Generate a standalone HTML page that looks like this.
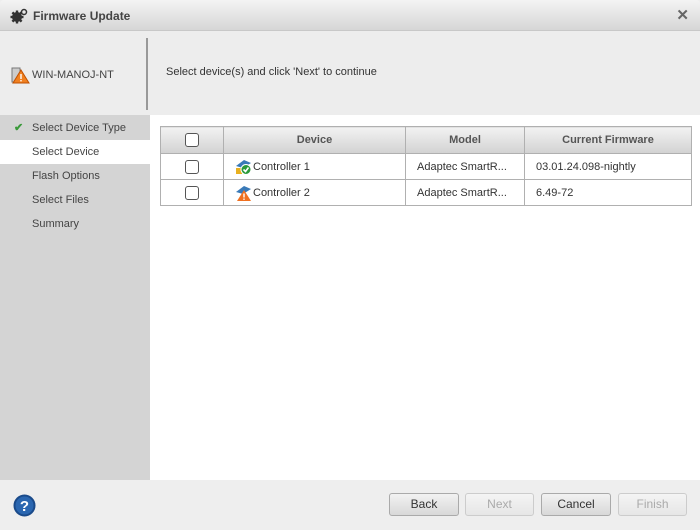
<!DOCTYPE html>
<html><head><meta charset="utf-8"><style>
*{margin:0;padding:0;box-sizing:border-box}
body{width:700px;height:530px;overflow:hidden;font-family:"Liberation Sans",Arial,sans-serif;font-size:11px;color:#333;background:#eee;position:relative}
.abs{position:absolute}
.title{left:0;top:0;width:700px;height:31px;background:linear-gradient(#f4f4f4,#d6d6d6);border-bottom:1px solid #c8c8c8;border-radius:4px 4px 0 0}
.title span{position:absolute;left:33px;top:9px;font-weight:bold;font-size:12px;color:#444}
.hdr{left:0;top:31px;width:700px;height:84px;background:#ededed}
.side{left:0;top:115px;width:150px;height:365px;background:#d4d4d4}
.item{position:absolute;left:0;width:150px;height:24px;line-height:25px;padding-left:32px;color:#444}
.main{left:150px;top:115px;width:550px;height:365px;background:#fff}
table{position:absolute;left:160px;top:126px;border-collapse:collapse;width:532px}
td,th{border:1px solid #b0b0b0;height:27px;padding:1px 0 0 11px;text-align:left;font-weight:normal;color:#333}
th{background:linear-gradient(#f2f2f2,#d2d2d2);font-weight:bold;color:#555;text-align:center;padding:0;font-size:11px}
tr.r td{height:26px}
.cb{display:inline-block;width:14px;height:14px;border:1px solid #555;border-radius:3px;background:#fff;vertical-align:middle}
.btn{position:absolute;top:493px;height:23px;border:1px solid #aaa;border-radius:3px;background:linear-gradient(#f2f2f2,#d8d8d8);text-align:center;line-height:21px;color:#333;font-size:12px}
.dis{color:#aaa;border-color:#ccc;background:linear-gradient(#f4f4f4,#e6e6e6)}
</style></head><body>
<div class="abs title">
<svg class="abs" style="left:10px;top:8px" width="18" height="16" viewBox="0 0 18 16"><circle cx="7" cy="9" r="5" fill="#333"/><circle cx="7" cy="9" r="2" fill="#ddd"/><g stroke="#333" stroke-width="2.4"><line x1="7" y1="2.5" x2="7" y2="15.5"/><line x1="0.5" y1="9" x2="13.5" y2="9"/><line x1="2.4" y1="4.4" x2="11.6" y2="13.6"/><line x1="11.6" y1="4.4" x2="2.4" y2="13.6"/></g><circle cx="14" cy="4" r="2.5" fill="none" stroke="#333" stroke-width="1.5"/></svg>
<span>Firmware Update</span>
<div class="abs" style="right:11px;top:6px;font-size:15px;color:#666;font-weight:bold">✕</div>
</div>
<div class="abs hdr">
<svg class="abs" style="left:10px;top:35px" width="20" height="18" viewBox="0 0 20 18"><rect x="2" y="2" width="8" height="14" fill="#ccc" stroke="#777"/><polygon points="11,4 19,17 3,17" fill="#f08020" stroke="#c05000"/><rect x="10.3" y="8" width="1.4" height="5" fill="#fff"/><rect x="10.3" y="14" width="1.4" height="1.4" fill="#fff"/></svg>
<div class="abs" style="left:32px;top:38px;color:#444">WIN-MANOJ-NT</div>
<div class="abs" style="left:146px;top:7px;width:2px;height:72px;background:#999"></div>
<div class="abs" style="left:166px;top:35px;color:#333">Select device(s) and click 'Next' to continue</div>
</div>
<div class="abs side">
<div class="item" style="top:1px"><span style="position:absolute;left:14px;color:#3a9a3a;font-weight:bold">✔</span>Select Device Type</div>
<div class="item" style="top:25px;background:#fff">Select Device</div>
<div class="item" style="top:49px">Flash Options</div>
<div class="item" style="top:73px">Select Files</div>
<div class="item" style="top:97px">Summary</div>
</div>
<div class="abs main"></div>
<table>
<tr><th style="width:63px"><span class="cb"></span></th><th style="width:182px">Device</th><th style="width:119px">Model</th><th>Current Firmware</th></tr>
<tr class="r"><td style="text-align:center;padding:0"><span class="cb"></span></td><td style="padding-left:11px"><svg width="18" height="16" viewBox="0 0 18 16" style="vertical-align:middle"><polygon points="1,7 9,1 16,4 8,9" fill="#3a7ab8"/><rect x="1" y="9" width="6" height="6" fill="#e8b020"/><circle cx="11" cy="10.5" r="5" fill="#2a9a3a" stroke="#fff"/><path d="M8.5 10.5l2 2 3-4" stroke="#fff" stroke-width="1.6" fill="none"/></svg>Controller 1</td><td>Adaptec SmartR...</td><td>03.01.24.098-nightly</td></tr>
<tr class="r"><td style="text-align:center;padding:0"><span class="cb"></span></td><td style="padding-left:11px"><svg width="18" height="16" viewBox="0 0 18 16" style="vertical-align:middle"><polygon points="1,7 9,1 16,4 8,9" fill="#3a7ab8"/><polygon points="9,5 16,16 2,16" fill="#f07020"/><rect x="8.3" y="8.5" width="1.4" height="4" fill="#fff"/><rect x="8.3" y="13.5" width="1.4" height="1.4" fill="#fff"/></svg>Controller 2</td><td>Adaptec SmartR...</td><td>6.49-72</td></tr>
</table>
<svg class="abs" style="left:13px;top:494px" width="23" height="23" viewBox="0 0 23 23"><circle cx="11.5" cy="11.5" r="11" fill="#1a4a8a"/><circle cx="11.5" cy="11.5" r="9" fill="#2a66b0"/><text x="11.5" y="17" text-anchor="middle" font-family="Liberation Sans" font-weight="bold" font-size="15" fill="#fff">?</text></svg>
<div class="btn" style="left:389px;width:70px">Back</div>
<div class="btn dis" style="left:465px;width:69px">Next</div>
<div class="btn" style="left:541px;width:70px">Cancel</div>
<div class="btn dis" style="left:618px;width:69px">Finish</div>
</body></html>
